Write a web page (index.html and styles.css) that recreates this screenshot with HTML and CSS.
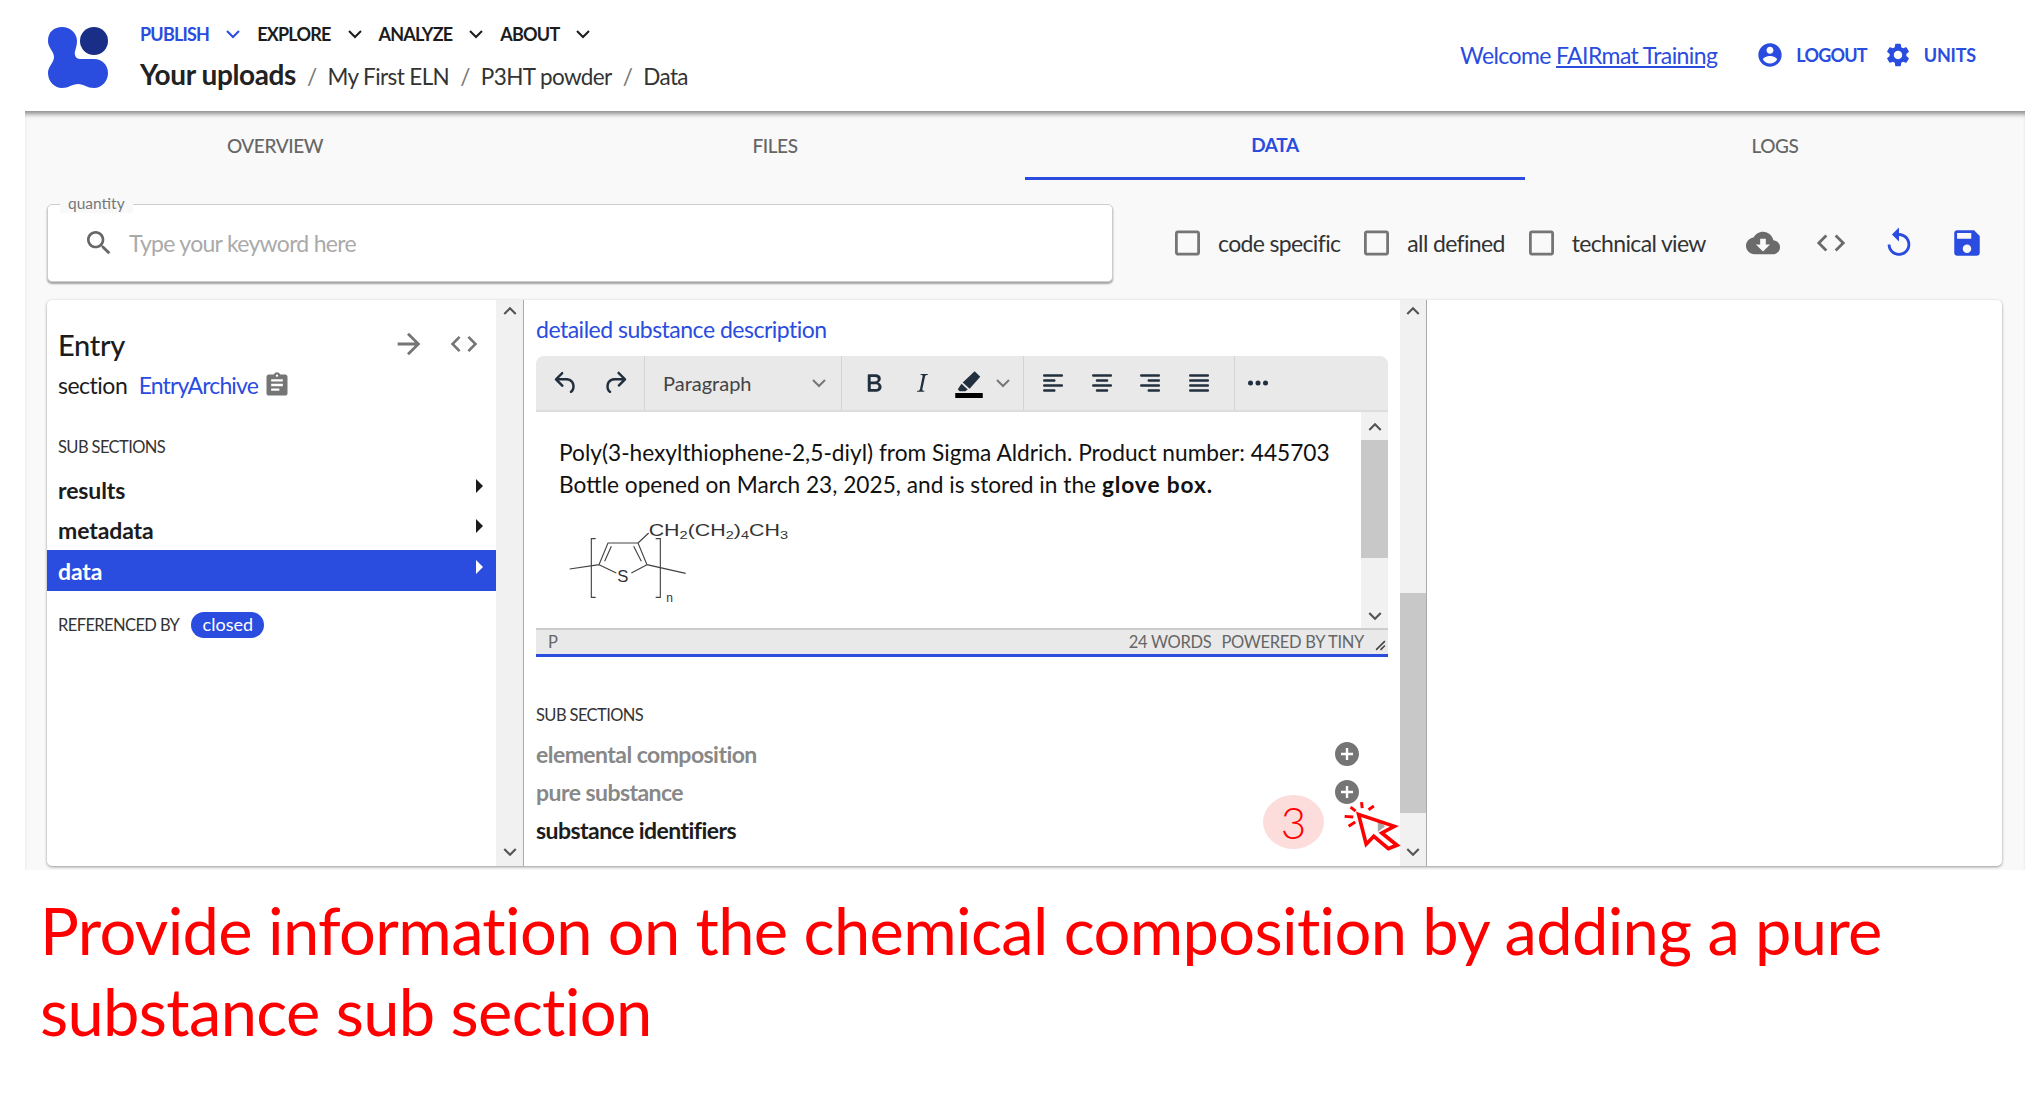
FILE: index.html
```html
<!DOCTYPE html>
<html lang="en">
<head>
<meta charset="utf-8">
<title>Your uploads</title>
<link rel="stylesheet" href="styles.css">
</head>
<body>
<header class="topbar">
  <svg class="logo" viewBox="0 0 60 62"><circle cx="46" cy="15" r="14" fill="#192e86"/><path fill="#2a4cdf" d="M0 15C0 6 6 1 14 1C22 1 29 7 29 15C29 22 26 25 27 29C28 33 31 33 34 33C38 33 40 33 46 33C54 33 60 39 60 47C60 55 54 62 46 62C39 62 36 58 30 58C24 58 21 62 14 62C6 62 0 55 0 47C0 40 6 37 6 31C6 25 0 22 0 15Z"/></svg>
  <div class="titles">
    <nav class="nav">
      <span class="nav-item active">PUBLISH<svg class="nav-chev" viewBox="0 0 14 9"><path d="M1 1l6 6 6-6"/></svg></span>
      <span class="nav-item">EXPLORE<svg class="nav-chev" viewBox="0 0 14 9"><path d="M1 1l6 6 6-6"/></svg></span>
      <span class="nav-item">ANALYZE<svg class="nav-chev" viewBox="0 0 14 9"><path d="M1 1l6 6 6-6"/></svg></span>
      <span class="nav-item">ABOUT<svg class="nav-chev" viewBox="0 0 14 9"><path d="M1 1l6 6 6-6"/></svg></span>
    </nav>
    <div class="crumbs">
      <strong class="crumb-main">Your uploads</strong><span class="sep">/</span><span>My First ELN</span><span class="sep">/</span><span>P3HT powder</span><span class="sep">/</span><span>Data</span>
    </div>
  </div>
  <div class="account">
    <span class="welcome">Welcome <u>FAIRmat Training</u></span>
    <span class="acct-btn first"><svg class="icon-acct" viewBox="0 0 24 24"><path d="M12 2C6.48 2 2 6.48 2 12s4.48 10 10 10 10-4.48 10-10S17.52 2 12 2zm0 3c1.66 0 3 1.34 3 3s-1.34 3-3 3-3-1.34-3-3 1.34-3 3-3zm0 14.2c-2.5 0-4.71-1.28-6-3.22.03-1.99 4-3.08 6-3.08 1.99 0 5.97 1.09 6 3.08-1.29 1.94-3.5 3.22-6 3.22z"/></svg>LOGOUT</span>
    <span class="acct-btn units"><svg class="icon-acct" viewBox="0 0 24 24"><path d="M19.14,12.94c0.04-0.3,0.06-0.61,0.06-0.94c0-0.32-0.02-0.64-0.07-0.94l2.03-1.58c0.18-0.14,0.23-0.41,0.12-0.61 l-1.92-3.32c-0.12-0.22-0.37-0.29-0.59-0.22l-2.39,0.96c-0.5-0.38-1.03-0.7-1.62-0.94L14.4,2.81c-0.04-0.24-0.24-0.41-0.48-0.41 h-3.84c-0.24,0-0.43,0.17-0.47,0.41L9.25,5.35C8.66,5.59,8.12,5.92,7.63,6.29L5.24,5.33c-0.22-0.08-0.47,0-0.59,0.22L2.74,8.87 C2.62,9.08,2.66,9.34,2.86,9.48l2.03,1.58C4.84,11.36,4.8,11.69,4.8,12s0.02,0.64,0.07,0.94l-2.03,1.58 c-0.18,0.14-0.23,0.41-0.12,0.61l1.92,3.32c0.12,0.22,0.37,0.29,0.59,0.22l2.39-0.96c0.5,0.38,1.03,0.7,1.62,0.94l0.36,2.54 c0.05,0.24,0.24,0.41,0.48,0.41h3.84c0.24,0,0.44-0.17,0.47-0.41l0.36-2.54c0.59-0.24,1.13-0.56,1.62-0.94l2.39,0.96 c0.22,0.08,0.47,0,0.59-0.22l1.92-3.32c0.12-0.22,0.07-0.47-0.12-0.61L19.14,12.94z M12,15.6c-1.98,0-3.6-1.62-3.6-3.6 s1.62-3.6,3.6-3.6s3.6,1.62,3.6,3.6S13.98,15.6,12,15.6z"/></svg>UNITS</span>
  </div>
</header>

<main class="stage">
  <div class="tabs">
    <div class="tab">OVERVIEW</div>
    <div class="tab">FILES</div>
    <div class="tab tab-on">DATA</div>
    <div class="tab">LOGS</div>
  </div>

  <div class="filters">
    <div class="search">
      <span class="search-label">quantity</span>
      <svg class="icon-search" viewBox="0 0 24 24"><path d="M15.5 14h-.79l-.28-.27C15.41 12.59 16 11.11 16 9.5 16 5.91 13.09 3 9.5 3S3 5.91 3 9.5 5.91 16 9.5 16c1.61 0 3.09-.59 4.23-1.57l.27.28v.79l5 4.99L20.49 19l-4.99-5zm-6 0C7.01 14 5 11.99 5 9.5S7.01 5 9.5 5 14 7.01 14 9.5 11.99 14 9.5 14z"/></svg>
      <span class="placeholder">Type your keyword here</span>
    </div>
    <label class="check c1"><svg class="box" viewBox="3 3 18 18"><path d="M19 5v14H5V5h14m0-2H5c-1.1 0-2 .9-2 2v14c0 1.1.9 2 2 2h14c1.1 0 2-.9 2-2V5c0-1.1-.9-2-2-2z"/></svg>code specific</label>
    <label class="check"><svg class="box" viewBox="3 3 18 18"><path d="M19 5v14H5V5h14m0-2H5c-1.1 0-2 .9-2 2v14c0 1.1.9 2 2 2h14c1.1 0 2-.9 2-2V5c0-1.1-.9-2-2-2z"/></svg>all defined</label>
    <label class="check"><svg class="box" viewBox="3 3 18 18"><path d="M19 5v14H5V5h14m0-2H5c-1.1 0-2 .9-2 2v14c0 1.1.9 2 2 2h14c1.1 0 2-.9 2-2V5c0-1.1-.9-2-2-2z"/></svg>technical view</label>
    <div class="actions">
      <svg class="act gray" viewBox="0 0 24 24"><path d="M19.35 10.04C18.67 6.59 15.64 4 12 4 9.11 4 6.6 5.64 5.35 8.04 2.34 8.36 0 10.91 0 14c0 3.31 2.69 6 6 6h13c2.76 0 5-2.24 5-5 0-2.64-2.05-4.78-4.65-4.96zM17 13l-5 5-5-5h3V9h4v4h3z"/></svg>
      <svg class="act gray" viewBox="0 0 24 24"><path d="M9.4 16.6L4.8 12l4.6-4.6L8 6l-6 6 6 6 1.4-1.4zm5.2 0l4.6-4.6-4.6-4.6L16 6l6 6-6 6-1.4-1.4z"/></svg>
      <svg class="act blue" viewBox="0 0 24 24"><path d="M12 5V1L7 6l5 5V7c3.31 0 6 2.69 6 6s-2.69 6-6 6-6-2.69-6-6H4c0 4.42 3.58 8 8 8s8-3.58 8-8-3.58-8-8-8z"/></svg>
      <svg class="act blue" viewBox="0 0 24 24"><path d="M17 3H5c-1.11 0-2 .9-2 2v14c0 1.1.89 2 2 2h14c1.1 0 2-.9 2-2V7l-4-4zm-5 16c-1.66 0-3-1.34-3-3s1.34-3 3-3 3 1.34 3 3-1.34 3-3 3zm3-10H5V5h10v4z"/></svg>
    </div>
  </div>

  <section class="browser">
    <div class="col col-left">
      <div class="entry-head">
        <h2 class="entry-title">Entry</h2>
        <svg class="head-ico arrow" viewBox="0 0 24 24"><path d="M12 4l-1.41 1.41L16.17 11H4v2h12.17l-5.58 5.59L12 20l8-8z"/></svg>
        <svg class="head-ico code" viewBox="0 0 24 24"><path d="M9.4 16.6L4.8 12l4.6-4.6L8 6l-6 6 6 6 1.4-1.4zm5.2 0l4.6-4.6-4.6-4.6L16 6l6 6-6 6-1.4-1.4z"/></svg>
      </div>
      <div class="section-line">section <a class="link entry-link">EntryArchive</a><svg class="clip" viewBox="0 0 24 24"><path d="M19 3h-4.18C14.4 1.84 13.3 1 12 1c-1.3 0-2.4.84-2.82 2H5c-1.1 0-2 .9-2 2v14c0 1.1.9 2 2 2h14c1.1 0 2-.9 2-2V5c0-1.1-.9-2-2-2zm-7 0c.55 0 1 .45 1 1s-.45 1-1 1-1-.45-1-1 .45-1 1-1zm2 14H7v-2h7v2zm3-4H7v-2h10v2zm0-4H7V7h10v2z"/></svg></div>
      <div class="caps caps-left">SUB SECTIONS</div>
      <div class="row">results<svg class="tri" viewBox="10 7 5 10"><path d="M10 17l5-5-5-5v10z"/></svg></div>
      <div class="row">metadata<svg class="tri" viewBox="10 7 5 10"><path d="M10 17l5-5-5-5v10z"/></svg></div>
      <div class="row row-on">data<svg class="tri" viewBox="10 7 5 10"><path d="M10 17l5-5-5-5v10z"/></svg></div>
      <div class="ref"><span class="caps">REFERENCED BY</span><span class="chip">closed</span></div>
    </div>
    <div class="scroll">
      <svg class="scroll-ch" viewBox="0 0 24 24"><path d="M7.41 15.41L12 10.83l4.59 4.58L18 14l-6-6-6 6z"/></svg>
      <svg class="scroll-ch" viewBox="0 0 24 24"><path d="M7.41 8.59L12 13.17l4.59-4.58L18 10l-6 6-6-6z"/></svg>
    </div>

    <div class="col col-mid">
      <a class="link field-label">detailed substance description</a>
      <div class="editor">
        <div class="toolbar">
          <div class="tgroup g-hist">
            <svg class="ti" viewBox="0 0 24 24"><path d="M6.4 8H12c3.7 0 6.2 2 6.8 5.1.6 2.7-.4 5.6-2.3 6.8a1 1 0 0 1-1-1.8c1.1-.6 1.8-2.7 1.4-4.6-.5-2.1-2.1-3.5-4.9-3.5H6.4l3.3 3.3a1 1 0 1 1-1.4 1.4l-5-5a1 1 0 0 1 0-1.4l5-5a1 1 0 0 1 1.4 1.4L6.4 8Z"/></svg>
            <svg class="ti" viewBox="0 0 24 24"><path d="M17.6 10H12c-2.8 0-4.4 1.4-4.9 3.5-.4 2 .3 4 1.4 4.6a1 1 0 1 1-1 1.8c-2-1.2-2.9-4.1-2.3-6.8.6-3 3-5.1 6.8-5.1h5.6l-3.3-3.3a1 1 0 1 1 1.4-1.4l5 5a1 1 0 0 1 0 1.4l-5 5a1 1 0 0 1-1.4-1.4l3.3-3.3Z"/></svg>
          </div>
          <div class="tgroup g-para"><span>Paragraph</span><svg class="tchev" viewBox="0 0 14 9"><path d="M1 1l6 6 6-6"/></svg></div>
          <div class="tgroup g-fmt">
            <svg class="ti" viewBox="0 0 24 24"><path d="M7.8 19c-.3 0-.5 0-.6-.2l-.2-.5V5.7c0-.2 0-.4.2-.5l.6-.2h5c1.5 0 2.7.3 3.5 1 .7.6 1.1 1.4 1.1 2.5a3 3 0 0 1-.6 1.9c-.4.6-1 1-1.6 1.2.4.1.9.3 1.3.6s.8.7 1 1.2c.4.4.5 1 .5 1.6 0 1.3-.4 2.3-1.3 3-.8.7-2.1 1-3.8 1H7.8Zm5-8.3c.6 0 1.2-.1 1.6-.5.4-.3.6-.7.6-1.3 0-1.1-.8-1.7-2.3-1.7H9.3v3.5h3.4Zm.5 6c.7 0 1.3-.1 1.7-.4.4-.4.6-.9.6-1.5s-.2-1-.7-1.4c-.4-.3-1-.4-2-.4H9.4v3.8h4Z"/></svg>
            <svg class="ti" viewBox="0 0 24 24"><path d="M16.7 4.7l-.1.9h-.3c-.6 0-1 0-1.4.3-.3.3-.4.6-.5 1.1l-2.1 9.8v.6c0 .5.4.8 1.4.8h.2l-.2.8H8l.2-.8h.2c1.1 0 1.8-.5 2-1.5l2-9.8.1-.5c0-.6-.4-.8-1.4-.8h-.3l.2-.9h5.8Z"/></svg>
            <svg class="ti hl" viewBox="0 0 24 24"><path d="M16.5 2.5l4.5 4.5-8.5 9.5-5.5-5z"/><path d="M6 12.5l5 4.6-2 1.4H4.5L3 17z"/><rect class="hl-bar" x="1" y="20" width="22" height="4"/></svg>
            <svg class="tchev" viewBox="0 0 14 9"><path d="M1 1l6 6 6-6"/></svg>
          </div>
          <div class="tgroup g-align">
            <svg class="ti" viewBox="0 0 24 24"><path d="M5 5h14c.6 0 1 .4 1 1s-.4 1-1 1H5a1 1 0 1 1 0-2Zm0 4h8c.6 0 1 .4 1 1s-.4 1-1 1H5a1 1 0 1 1 0-2Zm0 8h8c.6 0 1 .4 1 1s-.4 1-1 1H5a1 1 0 0 1 0-2Zm0-4h14c.6 0 1 .4 1 1s-.4 1-1 1H5a1 1 0 0 1 0-2Z"/></svg>
            <svg class="ti" viewBox="0 0 24 24"><path d="M5 5h14c.6 0 1 .4 1 1s-.4 1-1 1H5a1 1 0 1 1 0-2Zm3 4h8c.6 0 1 .4 1 1s-.4 1-1 1H8a1 1 0 1 1 0-2Zm0 8h8c.6 0 1 .4 1 1s-.4 1-1 1H8a1 1 0 0 1 0-2Zm-3-4h14c.6 0 1 .4 1 1s-.4 1-1 1H5a1 1 0 0 1 0-2Z"/></svg>
            <svg class="ti" viewBox="0 0 24 24"><path d="M5 5h14c.6 0 1 .4 1 1s-.4 1-1 1H5a1 1 0 1 1 0-2Zm6 4h8c.6 0 1 .4 1 1s-.4 1-1 1h-8a1 1 0 0 1 0-2Zm0 8h8c.6 0 1 .4 1 1s-.4 1-1 1h-8a1 1 0 0 1 0-2Zm-6-4h14c.6 0 1 .4 1 1s-.4 1-1 1H5a1 1 0 0 1 0-2Z"/></svg>
            <svg class="ti" viewBox="0 0 24 24"><path d="M5 5h14c.6 0 1 .4 1 1s-.4 1-1 1H5a1 1 0 1 1 0-2Zm0 4h14c.6 0 1 .4 1 1s-.4 1-1 1H5a1 1 0 1 1 0-2Zm0 8h14c.6 0 1 .4 1 1s-.4 1-1 1H5a1 1 0 0 1 0-2Zm0-4h14c.6 0 1 .4 1 1s-.4 1-1 1H5a1 1 0 0 1 0-2Z"/></svg>
          </div>
          <div class="tgroup g-more"><svg class="ti" viewBox="0 0 24 24"><circle cx="6" cy="12" r="2"/><circle cx="12" cy="12" r="2"/><circle cx="18" cy="12" r="2"/></svg></div>
        </div>
        <div class="edit-body">
          <div class="edit-text">
            <p class="para">Poly(3-hexylthiophene-2,5-diyl) from Sigma Aldrich. Product number: 445703<br>Bottle opened on March 23, 2025, and is stored in the <b class="para-bold">glove box.</b></p>
            <svg class="molecule" viewBox="0 0 800 330">
              <g class="bonds">
                <path d="M60 183L148 170L175 105H265L292 170L408 196M148 170L200 195M292 170L245 195M165 160L185 115M275 160L252 115M265 105L297 75"/>
                <path d="M138 92H125V268H138M318 92H332V268H318"/>
              </g>
              <text class="chem" x="297" y="84" textLength="418" lengthAdjust="spacingAndGlyphs">CH<tspan class="chem-sub" dy="8">2</tspan><tspan dy="-8">(CH</tspan><tspan class="chem-sub" dy="8">2</tspan><tspan dy="-8">)</tspan><tspan class="chem-sub" dy="8">4</tspan><tspan dy="-8">CH</tspan><tspan class="chem-sub" dy="8">3</tspan></text>
              <text class="chem" x="203" y="222">S</text>
              <text class="chem small" x="350" y="282">n</text>
            </svg>
          </div>
          <div class="edit-scroll">
            <svg class="scroll-ch" viewBox="0 0 24 24"><path d="M7.41 15.41L12 10.83l4.59 4.58L18 14l-6-6-6 6z"/></svg>
            <div class="edit-thumb"></div>
            <svg class="scroll-ch end" viewBox="0 0 24 24"><path d="M7.41 8.59L12 13.17l4.59-4.58L18 10l-6 6-6-6z"/></svg>
          </div>
        </div>
        <div class="statusbar">
          <span>P</span><span class="spacer"></span><span>24 WORDS</span><span class="powered">POWERED BY TINY</span>
          <svg class="grip" viewBox="0 0 10 10"><path d="M9 1L1 9M9 5L5 9"/></svg>
        </div>
      </div>
      <div class="caps caps-mid">SUB SECTIONS</div>
      <div class="row sub-row muted">elemental composition<svg class="plus" viewBox="2 2 20 20"><path d="M12 2C6.48 2 2 6.48 2 12s4.48 10 10 10 10-4.48 10-10S17.52 2 12 2zm5 11h-4v4h-2v-4H7v-2h4V7h2v4h4v2z"/></svg></div>
      <div class="row sub-row muted">pure substance<svg class="plus" viewBox="2 2 20 20"><path d="M12 2C6.48 2 2 6.48 2 12s4.48 10 10 10 10-4.48 10-10S17.52 2 12 2zm5 11h-4v4h-2v-4H7v-2h4V7h2v4h4v2z"/></svg></div>
      <div class="row sub-row">substance identifiers</div>
      <div class="badge">3</div>
      <svg class="cursor" viewBox="300 180 190 165">
        <path class="cur-tri" d="M420 250L442 268L420 285Z"/>
        <path class="cur-arrow" d="M362 232L470 268L432 288L478 325L452 335L408 298L385 322Z"/>
        <path class="cur-rays" d="M338 210L353 222M371 195L373 213M408 207L392 218M320 238L346 240M332 268L352 255"/>
      </svg>
    </div>
    <div class="scroll scroll-mid">
      <svg class="scroll-ch" viewBox="0 0 24 24"><path d="M7.41 15.41L12 10.83l4.59 4.58L18 14l-6-6-6 6z"/></svg>
      <div class="mid-thumb"></div>
      <svg class="scroll-ch end" viewBox="0 0 24 24"><path d="M7.41 8.59L12 13.17l4.59-4.58L18 10l-6 6-6-6z"/></svg>
    </div>
    <div class="col-right"></div>
  </section>
</main>

<p class="caption">Provide information on the chemical composition by adding a pure substance sub section</p>
</body>
</html>
```

FILE: styles.css
```css
* { box-sizing: border-box; }
html, body { margin: 0; padding: 0; }
body {
  width: 2025px;
  height: 1098px;
  overflow: hidden;
  background: #fff;
  color: #1c1c1c;
  font-family: "Lato", "Liberation Sans", sans-serif;
}
svg { display: block; flex: none; }

/* top bar */
.topbar { height: 111px; display: flex; padding-left: 48px; padding-right: 49px; }
.logo { width: 60px; height: 62px; margin-top: 26px; }
.titles { margin-left: 32px; padding-top: 22px; }
.nav { display: flex; height: 24px; align-items: center; font-size: 18px; font-weight: 700; letter-spacing: -.8px; }
.nav-item { display: flex; align-items: center; margin-right: 17px; }
.nav-item.active { color: #2a4cdf; }
.nav-chev { width: 14px; height: 9px; margin-left: 17px; fill: none; stroke: currentColor; stroke-width: 2; }
.crumbs { display: flex; align-items: baseline; margin-top: 11px; font-size: 22.5px; letter-spacing: -.6px; color: #333; }
.crumb-main { font-size: 28px; font-weight: 700; color: #222; letter-spacing: -.4px; }
.sep { margin: 0 11px; color: #777; }
.account { margin-left: auto; display: flex; align-items: center; height: 110px; color: #2a4cdf; }
.welcome { font-size: 23px; letter-spacing: -.6px; }
.acct-btn { display: flex; align-items: center; margin-left: 17px; font-size: 18px; font-weight: 700; letter-spacing: -.8px; }
.acct-btn.first { margin-left: 39px; }
.acct-btn.units { letter-spacing: -.2px; }
.icon-acct { width: 28px; height: 28px; fill: currentColor; margin-right: 12px; }

/* gray stage */
.stage {
  margin-left: 25px;
  height: 759px;
  background: #f9f9f9;
  box-shadow: inset 0 6px 5px -3px rgba(0, 0, 0, .45);
  padding-top: 1px;
}
.tabs { display: flex; height: 68px; }
.tab { flex: 1; display: flex; align-items: center; justify-content: center; padding-bottom: 2px; font-size: 19px; font-weight: 500; letter-spacing: -.4px; color: #666; }
.tab-on { color: #2a4cdf; font-weight: 700; border-bottom: 3px solid #2a4cdf; padding-bottom: 0; }

.filters { display: flex; align-items: center; height: 78px; margin-top: 24px; padding-left: 22px; }
.search {
  position: relative;
  flex: none;
  width: 1066px;
  height: 78px;
  display: flex;
  align-items: center;
  background: #fff;
  border: 1px solid #ccc;
  border-radius: 5px;
  box-shadow: 0 2px 2px rgba(0, 0, 0, .35);
  padding-left: 35px;
}
.search-label { position: absolute; left: 12px; top: -12px; padding: 0 8px; background: #f9f9f9; font-size: 15.5px; line-height: 20px; color: #777; }
.icon-search { width: 32px; height: 32px; fill: #666; }
.placeholder { margin-left: 14px; font-size: 23px; letter-spacing: -.7px; color: #aaa; }
.check { display: flex; align-items: center; flex: none; white-space: nowrap; font-size: 23px; letter-spacing: -.65px; color: #333; margin-left: 24px; }
.check.c1 { margin-left: 62px; }
.box { width: 25px; height: 26px; fill: #757575; margin-right: 18px; }
.actions { display: flex; align-items: center; margin-left: 40px; }
.act { width: 34px; height: 34px; margin-right: 34px; }
.gray { fill: #6b6b6b; }
.blue { fill: #2a4cdf; }

/* browser card */
.browser {
  display: flex;
  height: 566px;
  margin: 18px 23px 0 22px;
  background: #fff;
  border-radius: 5px;
  box-shadow: 0 1px 3px rgba(0, 0, 0, .4);
  overflow: hidden;
}
.col { flex: none; }
.col-left { width: 449px; padding-top: 28px; }
.entry-head { display: flex; align-items: center; height: 34px; padding-left: 11px; }
.entry-title { margin: 0 auto 0 0; font-size: 29px; font-weight: 500; line-height: 34px; letter-spacing: -.3px; }
.head-ico { margin-top: -3px; fill: #757575; }
.head-ico.arrow { width: 34px; height: 34px; margin-right: 22px; }
.head-ico.code { width: 32px; height: 32px; margin-right: 16px; }
.section-line { display: flex; align-items: center; height: 30px; margin-top: 8px; padding-left: 11px; font-size: 23px; letter-spacing: -.5px; gap: 6px; white-space: pre; }
.link { color: #2a4cdf; }
.entry-link { letter-spacing: -.85px; }
.clip { width: 28px; height: 28px; fill: #757575; margin-left: -1px; }
.caps { font-size: 16.5px; letter-spacing: -.6px; color: #333; line-height: 20px; }
.caps-left { margin: 37px 0 0 11px; }
.row { display: flex; align-items: center; justify-content: space-between; height: 40px; padding: 0 13px 0 11px; font-size: 23px; font-weight: 700; letter-spacing: -.1px; color: #1c1c1c; }
.caps-left + .row { margin-top: 13px; }
.row-on { height: 41px; background: #2a4cdf; color: #fff; }
.row-on .tri { fill: #fff; }
.tri { width: 7px; height: 14px; margin-top: -8px; fill: #1c1c1c; }
.ref { display: flex; align-items: center; height: 26px; margin: 21px 0 0 11px; }
.chip { margin-left: 12px; width: 73px; height: 26px; border-radius: 13px; background: #2a4cdf; color: #fff; font-size: 18px; line-height: 25px; text-align: center; }

.scroll { flex: none; width: 28px; display: flex; flex-direction: column; justify-content: space-between; background: #f1f1f1; border-right: 1px solid #aaa; padding: 0 0 1px; }
.scroll-ch { width: 26px; height: 26px; fill: #555; margin: -2px auto 0; }
.scroll-mid { width: 27px; justify-content: flex-start; }
.mid-thumb { height: 220px; margin-top: 269px; background: #c8c8c8; }
.scroll-ch.end { margin-top: auto; }

.col-mid { position: relative; width: 876px; padding: 15px 12px 0; }
.field-label { display: block; font-size: 23px; line-height: 28px; letter-spacing: -.5px; }
.editor { width: 852px; margin-top: 13px; }
.toolbar { display: flex; height: 56px; background: #e9e9e9; border-bottom: 2px solid #ddd; border-radius: 8px 8px 0 0; color: #222f3e; }
.tgroup { display: flex; align-items: center; border-right: 1px solid #d4d4d4; height: 54px; }
.ti { width: 30px; height: 30px; fill: #222f3e; }
.g-hist { width: 109px; padding-left: 15px; gap: 19px; }
.g-para { width: 197px; padding-left: 18px; font-size: 20px; color: #444; }
.g-para .tchev { margin-left: auto; margin-right: 15px; }
.tchev { width: 14px; height: 9px; fill: none; stroke: #777; stroke-width: 2; }
.g-fmt { width: 182px; padding-left: 17px; gap: 17.5px; }
.g-fmt .tchev { margin-left: -6px; }
.hl-bar { fill: #000; }
.g-align { width: 211px; padding-left: 14px; gap: 18.5px; }
.g-more { border: 0; padding-left: 8px; }
.edit-body { display: flex; height: 216px; }
.edit-text { flex: 1; padding: 25px 0 0 23px; }
.para { margin: 0; font-size: 22.7px; line-height: 32px; color: #111; white-space: nowrap; }
.para-bold { letter-spacing: .9px; }
.molecule { width: 270px; height: 110px; margin: 7px 0 0 -11px; }
.bonds { fill: none; stroke: #444; stroke-width: 3.4; }
.chem { font-family: "Liberation Sans", sans-serif; font-size: 50px; fill: #333; }
.chem.small { font-size: 36px; }
.chem-sub { font-size: 34px; }
.edit-scroll { flex: none; width: 27px; display: flex; flex-direction: column; background: #f1f1f1; }
.edit-scroll .scroll-ch { margin-top: 2px; }
.edit-thumb { height: 118px; background: #c8c8c8; }
.edit-scroll .scroll-ch.end { margin-top: auto; margin-bottom: -1px; }
.statusbar { display: flex; align-items: center; height: 29px; padding: 0 0 0 12px; background: #e9e9e9; border-top: 2px solid #ccc; border-bottom: 3px solid #2a4cdf; font-size: 16.5px; letter-spacing: -.3px; color: #666; }
.spacer { flex: 1; }
.powered { margin-left: 10px; margin-right: 11px; }
.grip { width: 11px; height: 11px; margin-top: 6px; fill: none; stroke: #444; stroke-width: 1.4; margin-right: 2px; }
.caps-mid { margin-top: 48px; }
.row.sub-row { height: 38px; padding: 0; letter-spacing: -.55px; }
.caps-mid + .row { margin-top: 10px; }
.muted { color: #888; }
.plus { width: 24px; height: 24px; fill: #757575; margin-right: 29px; }
.badge { position: absolute; left: 739px; top: 495px; width: 61px; height: 54px; border-radius: 50%; background: #fddcdc; color: #f00; font-size: 44px; font-weight: 300; line-height: 54px; text-align: center; }
.cursor { position: absolute; left: 814px; top: 497px; width: 63px; height: 55px; }
.cur-tri { fill: #222; }
.cur-arrow { fill: rgba(255,255,255,.6); stroke: #f00; stroke-width: 11; stroke-linejoin: miter; }
.cur-rays { fill: none; stroke: #f00; stroke-width: 9; }
.col-right { flex: 1; }

/* caption */
.caption { margin: 20px 0 0 40px; width: 1900px; font-size: 65px; letter-spacing: -.65px; line-height: 81px; color: #f00; font-weight: 400; }
```
